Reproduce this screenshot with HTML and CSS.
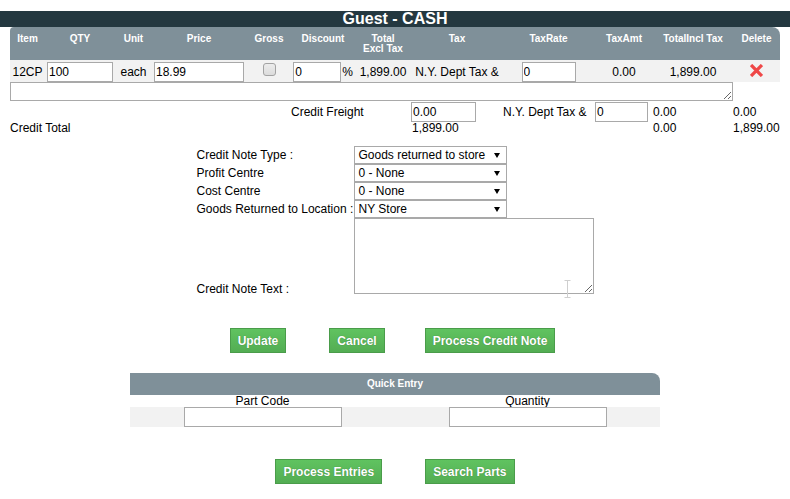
FILE: index.html
```html
<!DOCTYPE html>
<html>
<head>
<meta charset="utf-8">
<title>Credit Note</title>
<link rel="stylesheet" href="styles.css">
</head>
<body>
<div class="titlebar">Guest - CASH</div>
<div class="lines">
  <div class="row head">
    <div>Item</div><div>QTY</div><div>Unit</div><div>Price</div><div>Gross</div><div>Discount</div><div>Total<br>Excl Tax</div><div>Tax</div><div>TaxRate</div><div>TaxAmt</div><div>TotalIncl Tax</div><div>Delete</div>
  </div>
  <div class="row item">
    <div class="cell">12CP</div>
    <div class="cell"><input class="in w-qty" value="100"></div>
    <div class="cell">each</div>
    <div class="cell"><input class="in w-price" value="18.99"></div>
    <div class="cell top"><span class="check"></span></div>
    <div class="cell gap1"><input class="in w-disc" value="0"><span>%</span></div>
    <div class="cell">1,899.00</div>
    <div class="cell nowrap">N.Y. Dept Tax &amp;</div>
    <div class="cell"><input class="in w-rate" value="0"></div>
    <div class="cell">0.00</div>
    <div class="cell">1,899.00</div>
    <div class="cell top"><svg class="del" width="13" height="13" viewBox="0 0 13 13"><path d="M2.2 2.2 L10.8 10.8 M10.8 2.2 L2.2 10.8" stroke="#ef4747" stroke-width="3.3" stroke-linecap="square" fill="none"/></svg></div>
  </div>
  <div class="row note"><textarea class="linenote"></textarea></div>
  <div class="row freight">
    <div class="fr-label nowrap">Credit Freight</div>
    <div class="c8"><input class="in w-fr" value="0.00"></div>
    <div class="c9 nowrap">N.Y. Dept Tax &amp;</div>
    <div class="c10"><input class="in w-frate" value="0"></div>
    <div class="c11">0.00</div>
    <div class="c12">0.00</div>
  </div>
  <div class="row total">
    <div class="tot-label">Credit Total</div>
    <div class="c8">1,899.00</div>
    <div class="c11">0.00</div>
    <div class="c12">1,899.00</div>
  </div>
</div>

<div class="cn">
  <div class="lbl">Credit Note Type :</div>
  <div class="sel"><span>Goods returned to store</span><span class="arrow"></span></div>
  <div class="lbl">Profit Centre</div>
  <div class="sel"><span>0 - None</span><span class="arrow"></span></div>
  <div class="lbl">Cost Centre</div>
  <div class="sel"><span>0 - None</span><span class="arrow"></span></div>
  <div class="lbl">Goods Returned to Location :</div>
  <div class="sel"><span>NY Store</span><span class="arrow"></span></div>
  <div class="lbl txtlbl">Credit Note Text :</div>
  <div class="txtwrap">
    <textarea class="cntext"></textarea>
    <svg class="ibeam" width="7" height="18" viewBox="0 0 7 18"><path d="M0.5 0.5 H6.5 M3.5 0.5 V17.5 M0.5 17.5 H6.5" stroke="#cfcfcf" stroke-width="1" fill="none"/></svg>
  </div>
</div>

<div class="btns first">
  <button class="btn">Update</button>
  <button class="btn mid">Cancel</button>
  <button class="btn">Process Credit Note</button>
</div>

<div class="qe">
  <div class="qe-head">Quick Entry</div>
  <div class="qe-grid">
    <div class="qe-lbl">Part Code</div>
    <div class="qe-lbl">Quantity</div>
    <div class="qe-cell"><input class="in w-qe"></div>
    <div class="qe-cell"><input class="in w-qe"></div>
  </div>
</div>

<div class="btns second">
  <button class="btn">Process Entries</button>
  <button class="btn">Search Parts</button>
</div>
</body>
</html>
```
FILE: styles.css
```css
* { box-sizing: border-box; }

body {
  margin: 0;
  padding-top: 11px;
  font-family: "Liberation Sans", Arial, sans-serif;
  font-size: 12px;
  color: #000;
  background: #fff;
}

.titlebar {
  background: #243840;
  color: #fff;
  font-weight: bold;
  font-size: 16px;
  line-height: 16px;
  height: 16px;
  text-align: center;
}

.lines { margin: 0 10px; }

.row {
  display: grid;
  grid-template-columns: 35px 70px 37px 94px 46px 62px 58px 90px 93px 58px 80px 47px;
}

.head {
  background: #7f9099;
  color: #fff;
  font-weight: bold;
  font-size: 10px;
  line-height: 10px;
  height: 33px;
  padding-top: 7px;
  text-align: center;
  border-radius: 4px 8px 0 0;
}

.item {
  background: #f2f2f2;
  height: 22px;
  padding-top: 2px;
}

.cell {
  display: flex;
  justify-content: center;
  align-items: center;
  height: 20px;
}
.cell.top { align-items: flex-start; padding-top: 1px; }
.cell.gap1 { gap: 1px; }
.nowrap { white-space: nowrap; }

.in {
  height: 20px;
  border: 1px solid #a9a9a9;
  padding: 0 1px;
  margin: 0;
  font-family: inherit;
  font-size: 12px;
  color: #000;
  background: #fff;
  outline: none;
}
.w-qty { width: 66px; }
.w-price { width: 90px; }
.w-disc { width: 48px; }
.w-rate { width: 54px; }
.w-fr { width: 65px; }
.w-frate { width: 53px; }
.w-qe { width: 158px; }

.check {
  display: block;
  width: 13px;
  height: 13px;
  border: 1px solid #a3a3a3;
  border-radius: 3px;
  background: linear-gradient(#ececec, #dcdcdc);
}

.del { display: block; margin-top: 1px; }

.note { height: 19px; }
.linenote {
  grid-column: 1 / 12;
  display: block;
  width: 723px;
  height: 19px;
  margin: 0;
  padding: 1px;
  border: 1px solid #a9a9a9;
  font-family: inherit;
  font-size: 12px;
}

.freight {
  height: 21px;
  align-items: center;
}
.freight .in { align-self: start; }
.fr-label { grid-column: 6 / 8; margin-left: -1px; }
.c8 { grid-column: 8; }
.c9 { grid-column: 9; padding-left: 1px; }
.c10 { grid-column: 10; }
.c11 { grid-column: 11; }
.c12 { grid-column: 12; }
.freight .c8 { margin-left: -1px; }

.total {
  height: 12px;
  line-height: 12px;
}
.tot-label { grid-column: 1 / 6; }

.cn {
  width: 397px;
  margin: 12px auto 0;
  display: grid;
  grid-template-columns: 157px 240px;
  grid-template-rows: 18px 18px 18px 18px 76px;
}
.lbl {
  display: flex;
  align-items: center;
  white-space: nowrap;
}
.txtlbl {
  align-self: end;
  line-height: 10px;
}
.sel {
  width: 153px;
  height: 18px;
  border: 1px solid #a9a9a9;
  background: #fff;
  display: flex;
  align-items: center;
  justify-content: space-between;
  padding: 0 6px 0 4px;
  white-space: nowrap;
}
.arrow {
  width: 0;
  height: 0;
  border-left: 3px solid transparent;
  border-right: 3px solid transparent;
  border-top: 5px solid #000;
}
.txtwrap { position: relative; }
.cntext {
  display: block;
  width: 240px;
  height: 76px;
  margin: 0;
  border: 1px solid #a9a9a9;
  font-family: inherit;
  font-size: 12px;
}
.ibeam {
  position: absolute;
  left: 210px;
  top: 62px;
}

.btns {
  display: flex;
  justify-content: center;
}
.btns.first { margin-top: 34px; padding-right: 5px; }
.btns.first .mid { margin: 0 40px 0 43px; }
.btns.second { margin-top: 32px; gap: 43px; }

.btn {
  height: 25px;
  padding: 0 7px;
  margin: 0;
  border: 1px solid #4a9c4a;
  background: linear-gradient(#60c360, #53ad53);
  color: #fff;
  font-family: inherit;
  font-weight: bold;
  font-size: 12px;
  text-shadow: 0 0 1px rgba(0, 0, 0, 0.35);
  border-radius: 0;
}

.qe {
  width: 530px;
  margin: 20px auto 0;
}
.qe-head {
  background: #7f9099;
  color: #fff;
  font-weight: bold;
  font-size: 10px;
  height: 22px;
  line-height: 22px;
  text-align: center;
  border-radius: 0 8px 0 0;
}
.qe-grid {
  display: grid;
  grid-template-columns: 1fr 1fr;
}
.qe-lbl {
  height: 12px;
  line-height: 12px;
  text-align: center;
}
.qe-cell {
  background: #f2f2f2;
  height: 20px;
  display: flex;
  justify-content: center;
}
```
